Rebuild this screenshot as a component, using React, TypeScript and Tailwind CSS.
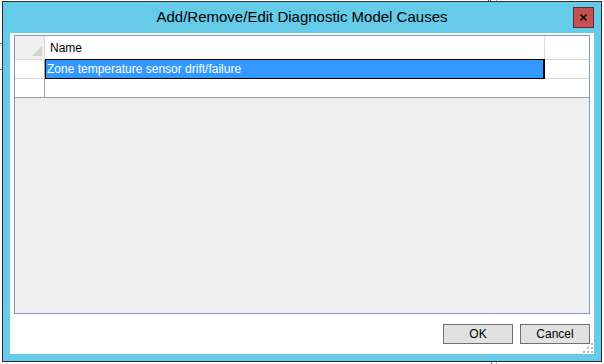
import React from "react"

const font = "font-['Segoe_UI','Liberation_Sans',Arial,sans-serif]"

function CloseButton() {
  return (
    <div className="flex h-[21px] w-[21px] items-center justify-center border border-[#5a3030] bg-[#c75050]">
      <svg width="7" height="7" viewBox="0 0 7 7">
        <path d="M0.5 0.5 L6.5 6.5 M6.5 0.5 L0.5 6.5" stroke="#111" strokeWidth="1.6" />
      </svg>
    </div>
  )
}

function Grip() {
  const dots = [
    [8, 0],
    [4, 4],
    [8, 4],
    [0, 8],
    [4, 8],
    [8, 8],
  ]
  return (
    <svg width="10" height="10" viewBox="0 0 10 10">
      {dots.map(([x, y]) => (
        <rect key={`${x}-${y}`} x={x} y={y} width="2" height="2" fill="#b8b8b8" />
      ))}
    </svg>
  )
}

function DialogButton({ label }: { label: string }) {
  return (
    <button className="flex h-[20px] w-[70px] items-center justify-center border border-[#707070] bg-[#e1e1e1] text-[12px] leading-none text-black">
      {label}
    </button>
  )
}

export default function App() {
  return (
    <div className={`relative h-[364px] w-[604px] overflow-hidden bg-white ${font}`}>
      {/* stray bits of the desktop behind the dialog */}
      <div className="absolute left-[488px] top-0 h-[1px] w-[1px] bg-[#555]" />
      <div className="absolute left-[490px] top-0 h-[1px] w-[1px] bg-[#3a8fd0]" />
      <div className="absolute left-[496px] top-0 h-[1px] w-[1px] bg-[#bbb]" />
      <div className="absolute left-[491px] top-[362px] h-[2px] w-[1px] bg-[#3a8fd0]" />
      <div className="absolute left-[496px] top-[362px] h-[2px] w-[1px] bg-[#bbb]" />
      <div className="absolute left-0 top-[43px] h-[1px] w-[2px] bg-[#888]" />
      <div className="absolute left-0 top-[69px] h-[1px] w-[2px] bg-[#888]" />

      {/* Window */}
      <div className="ml-[2px] mt-[1px] flex h-[361px] w-[600px] flex-col border border-[#2e2e2e] bg-[#65cbe9] px-[7px] pb-[7px]">
        {/* Title bar */}
        <div className="grid h-[31px] grid-cols-[1fr_auto_1fr] items-start">
          <div />
          <div className="pt-[6px] text-[15px] leading-[18px] text-black">
            Add/Remove/Edit Diagnostic Model Causes
          </div>
          <div className="flex justify-end pt-[5px]">
            <CloseButton />
          </div>
        </div>

        {/* Client area */}
        <div className="flex flex-1 flex-col bg-white px-[4px] pt-[2px]">
          {/* Grid */}
          <div className="flex h-[279px] flex-col border border-[#8298b5] bg-[#efefef]">
            {/* Header row */}
            <div className="flex h-[24px] border-b border-[#d8d8d8] bg-white">
              <div className="relative w-[30px] border-r border-[#d8d8d8] bg-[#f0f0f0]">
                <svg className="absolute bottom-[3px] right-[2px]" width="10" height="10" viewBox="0 0 10 10">
                  <path d="M10 0 L10 10 L0 10 Z" fill="#d3d3d3" />
                </svg>
              </div>
              <div className="flex w-[500px] items-center border-r border-[#dcdcdc] pl-[5px] text-[12px] text-black">
                Name
              </div>
              <div className="flex-1" />
            </div>
            {/* Row 1 */}
            <div className="flex h-[19px] border-b border-[#d8d8d8] bg-white">
              <div className="w-[30px] border-r border-[#a0a0a0]" />
              <div className="-mt-[1px] flex h-[20px] w-[500px] items-center border border-r-2 border-black bg-[#3399ff] pl-[1px] text-[12px] text-white">
                Zone temperature sensor drift/failure
              </div>
              <div className="flex-1" />
            </div>
            {/* Row 2 */}
            <div className="flex h-[19px] border-b border-[#a0a0a0] bg-white">
              <div className="w-[30px] border-r border-[#a0a0a0]" />
              <div className="flex-1" />
            </div>
          </div>

          {/* Buttons */}
          <div className="mt-[10px] flex justify-end gap-[7px]">
            <DialogButton label="OK" />
            <DialogButton label="Cancel" />
          </div>
          <div className="-mr-[3px] mt-[-1px] flex justify-end">
            <Grip />
          </div>
        </div>
      </div>
    </div>
  )
}
